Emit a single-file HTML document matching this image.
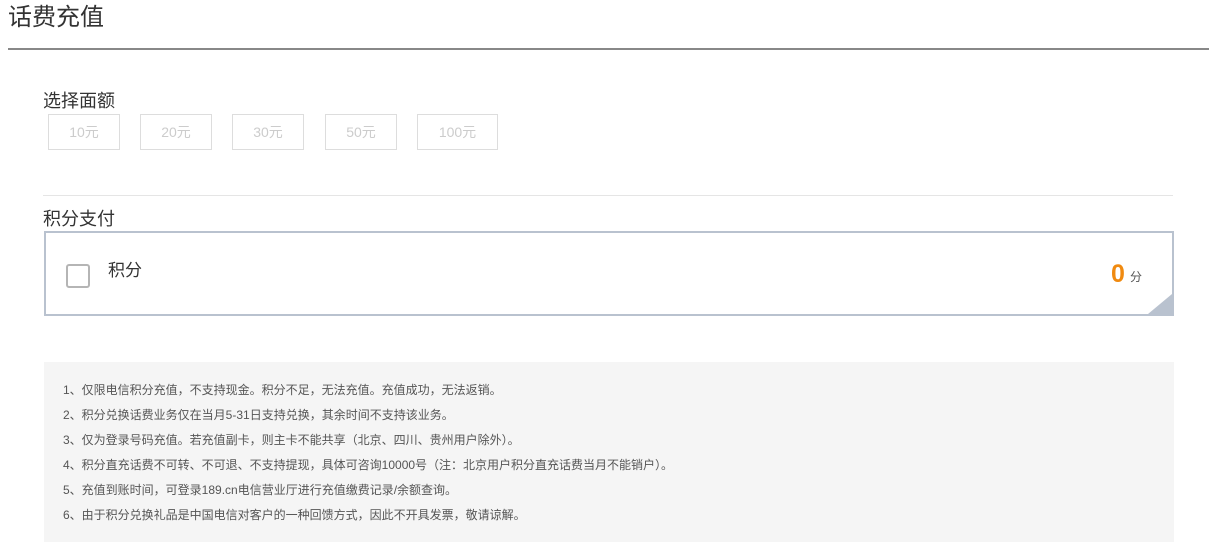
<!DOCTYPE html>
<html><head><meta charset="utf-8"><style>
*{margin:0;padding:0;box-sizing:border-box}
body{width:1215px;height:552px;background:#fff;position:relative;overflow:hidden;font-family:"Liberation Sans","Microsoft YaHei","Noto Sans CJK SC",sans-serif;color:#333}
.a{position:absolute;white-space:nowrap}
.btn{position:absolute;top:114px;height:36px;border:1px solid #ddd;color:#ccc;font-size:14px;line-height:34px;text-align:center}
.notes div{height:25px;line-height:25px}
</style></head><body>
<div class="a" style="left:8px;top:2px;font-size:24px;line-height:32px;color:#333">话费充值</div>
<div class="a" style="left:8px;top:48px;width:1201px;height:2px;background:#888"></div>
<div class="a" style="left:43px;top:88px;font-size:18px;line-height:26px">选择面额</div>
<div class="btn" style="left:48px;width:72px">10元</div>
<div class="btn" style="left:140px;width:72px">20元</div>
<div class="btn" style="left:232px;width:72px">30元</div>
<div class="btn" style="left:325px;width:72px">50元</div>
<div class="btn" style="left:417px;width:81px">100元</div>
<div class="a" style="left:43px;top:195px;width:1130px;height:1px;background:#e5e5e5"></div>
<div class="a" style="left:43px;top:206px;font-size:18px;line-height:26px">积分支付</div>
<div class="a" style="left:44px;top:231px;width:1130px;height:85px;border:2px solid #b9c2cf;overflow:hidden">
  <div class="a" style="left:20px;top:31px;width:24px;height:24px;border:2px solid #b5b5b5;border-radius:3px"></div>
  <div class="a" style="left:62px;top:26px;font-size:17px;line-height:24px">积分</div>
  <div class="a" style="left:1065px;top:26px;font-size:25px;line-height:30px;font-weight:bold;color:#f08a10">0</div>
  <div class="a" style="left:1084px;top:36px;font-size:12px;line-height:16px;color:#555">分</div>
  <div class="a" style="right:0;bottom:0;width:0;height:0;border-left:24px solid transparent;border-bottom:20px solid #b9c2cf"></div>
</div>
<div class="a notes" style="left:44px;top:362px;width:1130px;height:180px;background:#f5f5f5;padding:16px 0 0 19px;font-size:12px;color:#555">
<div>1、仅限电信积分充值，不支持现金。积分不足，无法充值。充值成功，无法返销。</div>
<div>2、积分兑换话费业务仅在当月5-31日支持兑换，其余时间不支持该业务。</div>
<div>3、仅为登录号码充值。若充值副卡，则主卡不能共享（北京、四川、贵州用户除外）。</div>
<div>4、积分直充话费不可转、不可退、不支持提现，具体可咨询10000号（注：北京用户积分直充话费当月不能销户）。</div>
<div>5、充值到账时间，可登录189.cn电信营业厅进行充值缴费记录/余额查询。</div>
<div>6、由于积分兑换礼品是中国电信对客户的一种回馈方式，因此不开具发票，敬请谅解。</div>
</div>
</body></html>
